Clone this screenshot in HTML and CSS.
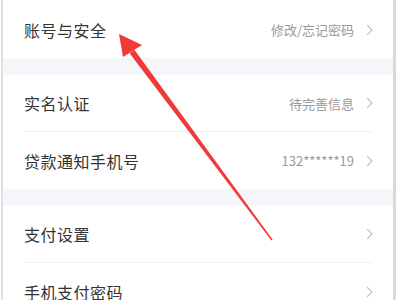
FILE: index.html
```html
<!DOCTYPE html>
<html lang="zh-CN">
<head>
<meta charset="UTF-8" />
<title>账号设置</title>
<link rel="stylesheet" href="styles.css">
</head>
<body>
    <div class="page">
        <div class="group">
            <div class="row">
                <span class="label">账号与安全</span>
                <span class="value">修改/忘记密码</span>
                <svg class="chevron" width="7" height="12" viewBox="0 0 7 12"><polyline points="1,1 6,6 1,11" /></svg>
            </div>
        </div>
        <div class="gap"></div>
        <div class="group">
            <div class="row">
                <span class="label">实名认证</span>
                <span class="value">待完善信息</span>
                <svg class="chevron" width="7" height="12" viewBox="0 0 7 12"><polyline points="1,1 6,6 1,11" /></svg>
            </div>
            <div class="row">
                <span class="label">贷款通知手机号</span>
                <span class="value">132******19</span>
                <svg class="chevron" width="7" height="12" viewBox="0 0 7 12"><polyline points="1,1 6,6 1,11" /></svg>
            </div>
        </div>
        <div class="gap"></div>
        <div class="group">
            <div class="row">
                <span class="label">支付设置</span>
                <span class="value"></span>
                <svg class="chevron" width="7" height="12" viewBox="0 0 7 12"><polyline points="1,1 6,6 1,11" /></svg>
            </div>
            <div class="row">
                <span class="label">手机支付密码</span>
                <span class="value"></span>
                <svg class="chevron" width="7" height="12" viewBox="0 0 7 12"><polyline points="1,1 6,6 1,11" /></svg>
            </div>
        </div>
    </div>
    <svg class="pointer" width="400" height="300" viewBox="0 0 400 300">
        <polygon points="134.4,49.7 129.6,53.3 271.4,240.4 272.6,239.6" />
        <polygon points="119,34 142,45 123,57" />
    </svg>
</body>
</html>
```

FILE: styles.css
```css
*{
    box-sizing: border-box;
}
html, body{
    margin: 0;
    padding: 0;
    background: #ffffff;
    overflow: hidden;
}
body{
    position: relative;
    width: 400px;
    height: 300px;
    font-family: "Noto Sans CJK SC", "Noto Sans", sans-serif;
}
.page{
    margin: 0 4px 0 1px;
    height: 300px;
    padding-top: 1px;
    border-left: 2px solid #e0e0e0;
    border-right: 3px solid #d9d9d9;
    background: #ffffff;
}
.gap{
    height: 17px;
    background: #f4f6f9;
}
.row{
    display: flex;
    align-items: center;
    height: 57px;
    margin: 0 20px 0 21px;
    border-bottom: 1px solid #f0f0f0;
}
.group .row:last-child{
    border-bottom: none;
}
.label{
    flex: 1;
    font-size: 16px;
    color: #333333;
    letter-spacing: 0.5px;
}
.value{
    font-size: 13px;
    color: #9a9a9a;
    margin-right: 12px;
}
.chevron polyline{
    fill: none;
    stroke: #c4c4c4;
    stroke-width: 1.2;
}
.pointer{
    position: absolute;
    left: 0;
    top: 0;
    pointer-events: none;
}
.pointer polygon{
    fill: #f03a3a;
}
```
